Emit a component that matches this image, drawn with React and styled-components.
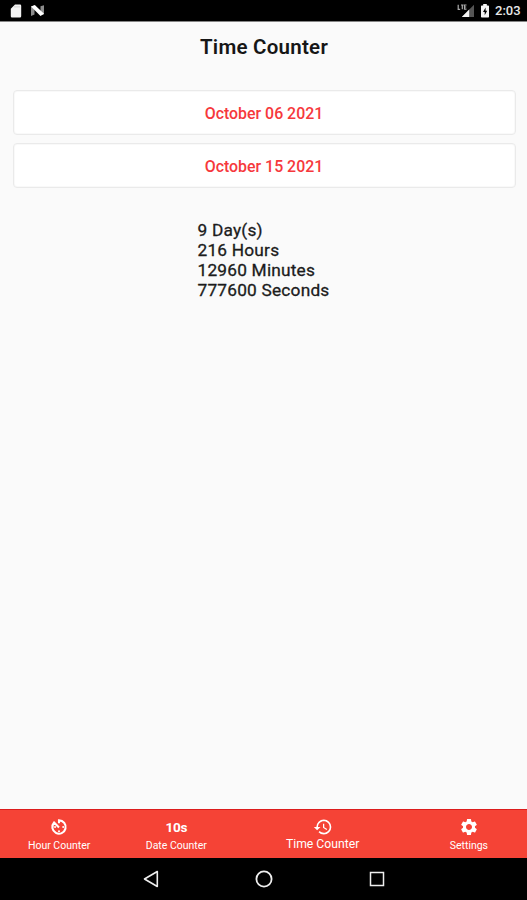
import React from "react";
import styled, { createGlobalStyle } from "styled-components";
import { MdHistory, MdSettings } from "react-icons/md";

const GlobalStyle = createGlobalStyle`
  * { box-sizing: border-box; }
  body { margin: 0; background: #fafafa; font-family: Roboto, sans-serif; }
`;

const Screen = styled.div`
  width: 527px;
  height: 900px;
  display: flex;
  flex-direction: column;
  background: #fafafa;
  overflow: hidden;
`;

const StatusBar = styled.header`
  height: 22px;
  flex: none;
  padding: 0 6px 0 10px;
  display: flex;
  align-items: center;
  justify-content: space-between;
  background: #000;
  color: #e8e8e8;
  border-bottom: 1px solid #858585;
`;

const StatusGroup = styled.div`
  display: flex;
  align-items: center;
  gap: ${(p) => p.$gap}px;
`;

const Clock = styled.span`
  font-size: 13px;
  line-height: 20px;
  font-weight: 500;
  width: 26px;
  white-space: nowrap;
`;

const Title = styled.h1`
  margin: 0;
  padding-left: 1px;
  height: 51px;
  line-height: 51px;
  text-align: center;
  font-size: 20.5px;
  font-weight: 600;
  letter-spacing: 0.25px;
  color: #161616;
`;

const Content = styled.main`
  flex: 1;
  display: flex;
  flex-direction: column;
`;

const DateList = styled.div`
  display: flex;
  flex-direction: column;
  gap: 8px;
  padding: 17px 11px 0 13px;
`;

const DateButton = styled.button`
  height: 45px;
  padding: 1px 1px 0 0;
  border: 1px solid #eaeaea;
  border-radius: 4px;
  box-shadow: inset 0 0 0 1px #f9f9f9;
  background: #fff;
  color: #f6383c;
  font-family: inherit;
  font-size: 15.9px;
  font-weight: 500;
`;

const Results = styled.div`
  align-self: center;
  margin-top: 32px;
  font-size: 17.3px;
  line-height: 20.1px;
  font-weight: 400;
  letter-spacing: 0.2px;
  -webkit-text-stroke: 0.3px #1c1c1c;
  color: #1c1c1c;
  white-space: nowrap;
`;

const TabBar = styled.nav`
  height: 49px;
  flex: none;
  display: flex;
  background: #f54336;
  border-top: 1px solid #dc1c1c;
`;

const Tab = styled.div`
  flex: ${(p) => (p.$active ? 1.5 : 1)} 1 0;
  display: flex;
  flex-direction: column;
  align-items: center;
  padding: 7px 0 0 1px;
  color: #fff;
`;

const TabIcon = styled.div`
  height: 20px;
  display: flex;
  align-items: center;
  justify-content: center;
  font-size: 20px;
`;

const TenSeconds = styled.span`
  font-size: 13.5px;
  font-weight: 700;
  line-height: 20px;
  letter-spacing: -0.3px;
`;

const TabLabel = styled.span`
  font-size: ${(p) => (p.$active ? 12.2 : 10.5)}px;
  line-height: ${(p) => (p.$active ? 15 : 17)}px;
  white-space: nowrap;
`;

const SystemBar = styled.footer`
  height: 42px;
  flex: none;
  display: flex;
  align-items: center;
  justify-content: center;
  gap: 94px;
  background: #000;
`;

const HourTimer = () => (
  <svg width="20" height="20" viewBox="0 0 24 24" fill="none" stroke="currentColor" strokeWidth="2.500">
    <path d="M12 7.500V4a8 8 0 1 1-5.900 2.600L12 12.500" strokeLinejoin="miter" />
    <g fill="currentColor" stroke="none">
      <circle cx="12" cy="17" r="1.200" />
      <circle cx="17" cy="12" r="1.200" />
      <circle cx="7.300" cy="12" r="1.200" />
    </g>
  </svg>
);

const tabs = [
  { label: "Hour Counter", icon: <HourTimer /> },
  { label: "Date Counter", icon: <TenSeconds>10s</TenSeconds> },
  { label: "Time Counter", icon: <MdHistory />, active: true },
  { label: "Settings", icon: <MdSettings /> },
];

const SdCard = () => (
  <svg width="12" height="14" viewBox="0 0 12 14">
    <path d="M5 0.5h5a1.2 1.2 0 0 1 1.2 1.2v10.6a1.2 1.2 0 0 1-1.2 1.2H2a1.2 1.2 0 0 1-1.2-1.2V4.7z" fill="#f2f2f2" />
    <path d="M5 2v1.6M7 2v1.6M9 2v1.6" stroke="#bbb" strokeWidth="0.8" />
  </svg>
);

const Nougat = () => (
  <svg width="15" height="13" viewBox="0 0 15 13">
    <path d="M1 2.500l3.500-1v9l-3.500 1.500zM10.500 2.200l3.500-1v9l-3.500 1z" fill="#8c8c8c" />
    <path d="M1 2.500L4.800 1 14 9.800 10.500 12z" fill="#fff" />
  </svg>
);

const Signal = () => (
  <svg width="18" height="14" viewBox="0 0 18 14">
    <path d="M17 0.8V13H4.8z" fill="#555" />
    <path d="M12.2 5.6V13H4.8z" fill="#f4f4f4" />
    <path d="M1.2 0.8v4.500h2M4 1h2.600M5.300 1v4.300M9.500 1h-2v4.200h2M7.500 3h1.700" fill="none" stroke="#aaa" strokeWidth="1.200" />
  </svg>
);

const Battery = () => (
  <svg width="10" height="14" viewBox="0 0 10 14">
    <path d="M3.200 0h3.600v1.500h1.400q.8 0 .8.8v10.400q0 .8-.8.8H1.800q-.8 0-.8-.8V2.300q0-.8.8-.8h1.400z" fill="#f4f4f4" />
    <path d="M5.600 3.500L3 8h1.700v3.200L7.200 6.800H5.600z" fill="#000" />
  </svg>
);

export default function App() {
  return (
    <>
      <GlobalStyle />
      <Screen>
        <StatusBar>
          <StatusGroup $gap={8}>
            <SdCard />
            <Nougat />
          </StatusGroup>
          <StatusGroup $gap={5}>
            <Signal />
            <Battery />
            <Clock>2:03</Clock>
          </StatusGroup>
        </StatusBar>
        <Content>
          <Title>Time Counter</Title>
          <DateList>
            <DateButton>October 06 2021</DateButton>
            <DateButton>October 15 2021</DateButton>
          </DateList>
          <Results>
            <div>9 Day(s)</div>
            <div>216 Hours</div>
            <div>12960 Minutes</div>
            <div>777600 Seconds</div>
          </Results>
        </Content>
        <TabBar>
          {tabs.map((t) => (
            <Tab key={t.label} $active={t.active}>
              <TabIcon>{t.icon}</TabIcon>
              <TabLabel $active={t.active}>{t.label}</TabLabel>
            </Tab>
          ))}
        </TabBar>
        <SystemBar>
          <svg width="18" height="20" viewBox="0 0 18 20">
            <path d="M15.300 2.500v15L2.500 10z" fill="none" stroke="#eee" strokeWidth="1.600" strokeLinejoin="round" />
          </svg>
          <svg width="20" height="20" viewBox="0 0 20 20">
            <circle cx="10" cy="10" r="7.600" fill="none" stroke="#eee" strokeWidth="1.800" />
          </svg>
          <svg width="18" height="18" viewBox="0 0 18 18">
            <rect x="2.500" y="2.500" width="13" height="13" fill="none" stroke="#eee" strokeWidth="1.500" />
          </svg>
        </SystemBar>
      </Screen>
    </>
  );
}
